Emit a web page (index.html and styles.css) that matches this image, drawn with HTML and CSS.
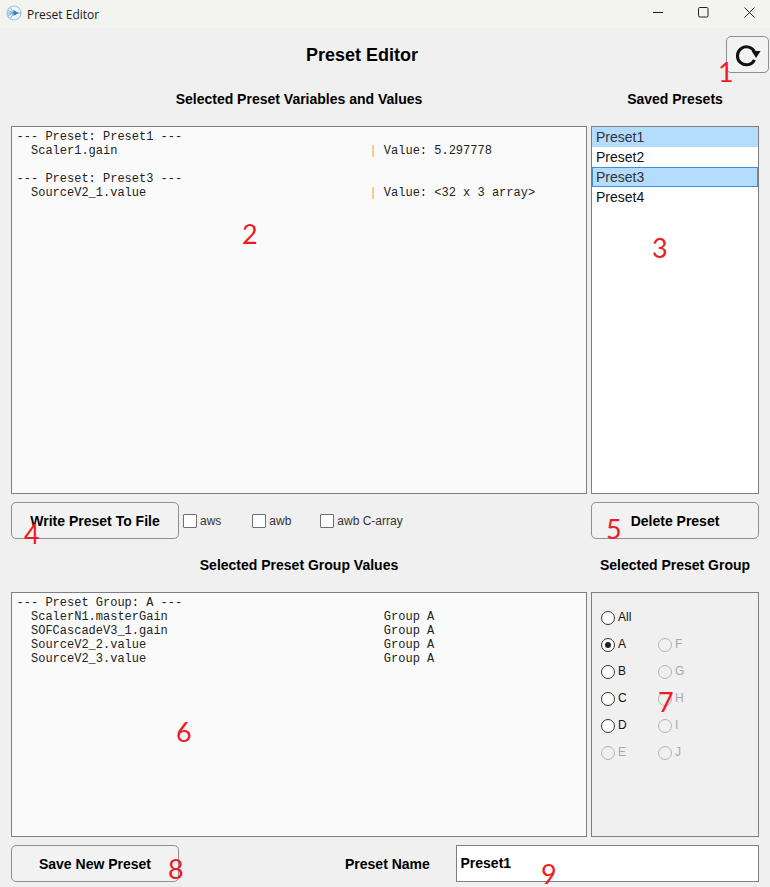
FILE: index.html
```html
<!DOCTYPE html>
<html lang="en">
<head>
<meta charset="utf-8">
<title>Preset Editor</title>
<link rel="stylesheet" href="styles.css">
</head>
<body>
<div class="window">
  <header class="titlebar">
    <svg class="app-icon" width="16" height="16" viewBox="0 0 16 16" fill="none">
      <circle cx="8" cy="8" r="7" stroke="#9cc9ec" stroke-width="1.2"/>
      <path d="M1 8h14" stroke="#6fb0e4"/>
      <path d="M8 8L4.5 3M8 8L4.5 13M8 8L2 5.5M8 8l-6 2.5" stroke="#6aa6da" stroke-width=".9"/>
      <path d="M7.5 5L12.5 8l-5 3z" fill="#3a78c0"/>
    </svg>
    <span class="app-name">Preset Editor</span>
    <div class="win-controls">
      <svg width="46" height="28" viewBox="0 0 46 28"><path d="M19 12.5h10" stroke="#222" fill="none"/></svg>
      <svg width="46" height="28" viewBox="0 0 46 28"><rect x="18.5" y="7.5" width="9.5" height="9.5" rx="1.2" stroke="#222" fill="none"/></svg>
      <svg width="46" height="28" viewBox="0 0 46 28"><path d="M18.5 7.5l10 10M28.5 7.5l-10 10" stroke="#222" fill="none"/></svg>
    </div>
  </header>

  <main class="content">
    <section class="top-row">
      <h1 class="title">Preset Editor</h1>
      <button class="refresh" type="button" aria-label="Refresh">
        <svg width="26" height="26" viewBox="0 0 26 26" fill="none">
          <path d="M19.5 17.8A9 9 0 1 1 19.8 10.5" stroke="#111" stroke-width="3"/>
          <path d="M16.6 9h9l-4.5 7z" fill="#111"/>
        </svg>
      </button>
    </section>

    <section class="headings">
      <h2 class="heading">Selected Preset Variables and Values</h2>
      <h2 class="heading">Saved Presets</h2>
    </section>

    <section class="panels panels-top">
      <pre class="textbox">--- Preset: Preset1 ---
  Scaler1.gain                                   <span class="pipe">|</span> Value: 5.297778

--- Preset: Preset3 ---
  SourceV2_1.value                               <span class="pipe">|</span> Value: &lt;32 x 3 array&gt;</pre>
      <ul class="listbox">
        <li class="item selected">Preset1</li>
        <li class="item">Preset2</li>
        <li class="item selected focused">Preset3</li>
        <li class="item">Preset4</li>
      </ul>
    </section>

    <section class="actions">
      <div class="write-group">
        <button class="btn btn-write" type="button">Write Preset To File</button>
        <label class="check check-aws"><span class="box"></span>aws</label>
        <label class="check check-awb"><span class="box"></span>awb</label>
        <label class="check"><span class="box"></span>awb C-array</label>
      </div>
      <button class="btn btn-delete" type="button">Delete Preset</button>
    </section>

    <section class="headings headings-mid">
      <h2 class="heading">Selected Preset Group Values</h2>
      <h2 class="heading">Selected Preset Group</h2>
    </section>

    <section class="panels panels-bottom">
      <pre class="textbox">--- Preset Group: A ---
  ScalerN1.masterGain                              Group A
  SOFCascadeV3_1.gain                              Group A
  SourceV2_2.value                                 Group A
  SourceV2_3.value                                 Group A</pre>
      <div class="radio-panel">
        <div class="radio"><span class="dot"></span>All</div>
        <div class="radio-spacer"></div>
        <div class="radio"><span class="dot checked"></span>A</div>
        <div class="radio off"><span class="dot"></span>F</div>
        <div class="radio"><span class="dot"></span>B</div>
        <div class="radio off"><span class="dot"></span>G</div>
        <div class="radio"><span class="dot"></span>C</div>
        <div class="radio off"><span class="dot"></span>H</div>
        <div class="radio"><span class="dot"></span>D</div>
        <div class="radio off"><span class="dot"></span>I</div>
        <div class="radio off"><span class="dot"></span>E</div>
        <div class="radio off"><span class="dot"></span>J</div>
      </div>
    </section>

    <section class="save-row">
      <button class="btn btn-save" type="button">Save New Preset</button>
      <span class="name-label">Preset Name</span>
      <div class="name-input">Preset1</div>
    </section>
  </main>

  <span class="mark m1">1</span>
  <span class="mark m2">2</span>
  <span class="mark m3">3</span>
  <span class="mark m4">4</span>
  <span class="mark m5">5</span>
  <span class="mark m6">6</span>
  <span class="mark m7">7</span>
  <span class="mark m8">8</span>
  <span class="mark m9">9</span>
</div>
</body>
</html>
```

FILE: styles.css
```css
* { box-sizing: border-box; }
html, body { margin: 0; padding: 0; }
body { background: #f0f0f0; font-family: "Liberation Sans", Arial, sans-serif; color: #000; }
.window { position: relative; width: 770px; height: 887px; overflow: hidden; background: #f0f0f0; }

.titlebar { display: flex; align-items: center; height: 28px; background: #f3f3ef; padding-left: 6px; }
.app-icon { flex: none; margin-top: -3px; }
.app-name { margin-left: 5px; font: 12px "Open Sans", "Noto Sans", sans-serif; color: #1a1a1a; }
.win-controls { display: flex; margin-left: auto; margin-right: -2px; }
.win-controls svg { display: block; }

.content { display: flex; flex-direction: column; padding: 0 11px; }

.top-row { display: flex; justify-content: center; position: relative; height: 53px; }
.title { margin: 17px 0 0; font-size: 18px; line-height: 20px; font-weight: bold; padding-right: 46px; }
.refresh { position: absolute; right: -10px; top: 8px; width: 43px; height: 37px; padding: 0; display: flex; align-items: center; justify-content: center; background: #f2f2f2; border: 1px solid #8f8f8f; border-radius: 5px; }

.headings { display: grid; grid-template-columns: 576px 168px; column-gap: 4px; height: 45px; }
.heading { margin: 10px 0 0; text-align: center; font-size: 14px; line-height: 16px; font-weight: bold; }
.headings-mid { height: 53px; }
.headings-mid .heading { margin-top: 18px; }

.panels { display: grid; grid-template-columns: 576px 168px; column-gap: 4px; }
.panels-top { height: 368px; }
.panels-bottom { height: 245px; }

.textbox { margin: 0; padding: 3px 5px 3px 4.6px; background: #fafafa; border: 1px solid #7f7f7f; font: 12px/14px "Liberation Mono", "Courier New", monospace; color: #222; overflow: hidden; }
.pipe { color: #eba458; }

.listbox { list-style: none; margin: 0; padding: 0; background: #fff; border: 1px solid #7f7f7f; }
.item { height: 20px; padding-left: 4px; font-size: 14px; line-height: 20px; color: #111; }
.selected { background: #b3dcfd; color: #333; }
.focused { border: 1px solid #3d8fd6; padding-left: 3px; line-height: 18px; }

.actions { display: flex; justify-content: space-between; align-items: flex-start; margin-top: 8px; height: 37px; }
.write-group { display: flex; align-items: center; }
.btn { height: 37px; padding: 0; background: #f2f2f2; border: 1px solid #8f8f8f; border-radius: 5px; font: bold 14px "Liberation Sans", Arial, sans-serif; color: #000; }
.btn-write { width: 168px; }
.btn-delete { width: 168px; }
.btn-save { width: 168px; }

.check { display: flex; align-items: center; font-size: 12px; color: #333; }
.box { width: 14px; height: 14px; margin-right: 3px; background: #fff; border: 1px solid #6f6f6f; border-radius: 1px; }
.check-aws { margin-left: 4px; margin-right: 31px; }
.check-awb { margin-right: 29px; }

.radio-panel { display: grid; grid-template-columns: 57px 1fr; grid-auto-rows: 27px; padding: 10px 0 0 9px; background: #f0f0f0; border: 1px solid #7f7f7f; align-content: start; }
.radio { display: flex; align-items: center; font-size: 12px; line-height: 12px; color: #111; }
.dot { flex: none; position: relative; width: 14px; height: 14px; margin: 2px 3px 0 0; background: #fff; border: 1px solid #333; border-radius: 50%; }
.checked::after { content: ""; position: absolute; left: 3px; top: 3px; width: 6px; height: 6px; border-radius: 50%; background: #222; }
.off { color: #a8a8a8; }
.off .dot { background: #f0f0f0; border-color: #b4b4b4; }

.save-row { display: flex; align-items: center; margin-top: 8px; height: 37px; }
.name-label { flex: none; width: 84px; margin-left: 166px; font-size: 14px; font-weight: bold; white-space: nowrap; }
.name-input { flex: none; margin-left: 27px; width: 303px; height: 37px; padding-left: 3.5px; background: #fff; border: 1px solid #7f7f7f; font-size: 14px; font-weight: bold; line-height: 35px; }

.mark { position: absolute; font: 27px/22px Lato, "Open Sans", sans-serif; color: #ed1c24; }
.m1 { left: 718px; top: 61px; }
.m2 { left: 242px; top: 223px; }
.m3 { left: 652px; top: 237px; }
.m4 { left: 24px; top: 523px; }
.m5 { left: 606px; top: 518px; }
.m6 { left: 176px; top: 721px; }
.m7 { left: 658px; top: 691px; }
.m8 { left: 168px; top: 858px; }
.m9 { left: 541px; top: 863px; }
```
